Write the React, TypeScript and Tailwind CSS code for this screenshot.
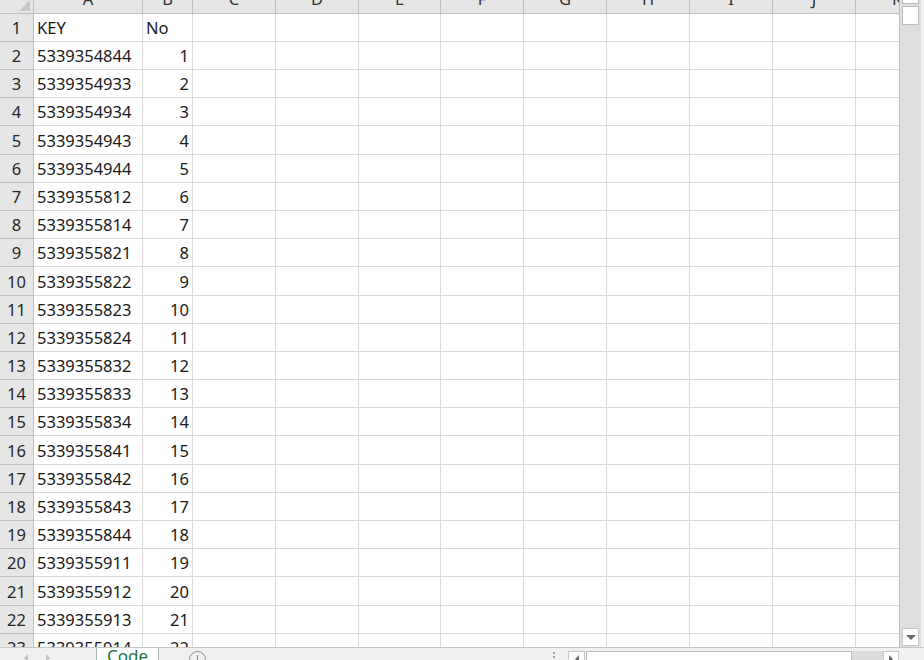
import React from "react";

const cols = ["A", "B", "C", "D", "E", "F", "G", "H", "I", "J", "K"];
const colW = ["w-[109px]", "w-[50px]", "w-[83px]", "w-[83px]", "w-[82px]", "w-[83px]", "w-[83px]", "w-[83px]", "w-[83px]", "w-[83px]", "w-[83px]"];

const keys = [
  "5339354844", "5339354933", "5339354934", "5339354943", "5339354944",
  "5339355812", "5339355814", "5339355821", "5339355822", "5339355823",
  "5339355824", "5339355832", "5339355833", "5339355834", "5339355841",
  "5339355842", "5339355843", "5339355844", "5339355911", "5339355912",
  "5339355913", "5339355914",
];

// excel row heights drift by a pixel now and then
const tallRows = new Set([5, 10, 16, 21]);

function Row({ n, a, b, text }: { n: number; a: string; b: string; text?: boolean }) {
  const h = tallRows.has(n) ? "h-[29px]" : "h-[28px]";
  return (
    <div className={`flex shrink-0 ${h}`}>
      <div className="w-[34px] shrink-0 flex items-center justify-center pt-[2px] bg-[#e6e6e6] border-r border-b border-[#bfbfbf] text-[#262626]">
        {n}
      </div>
      {cols.map((c, i) => (
        <div
          key={c}
          className={`${colW[i]} shrink-0 flex items-center pt-[2px] border-r border-b border-[#dadada] ${
            i === 1 && !text ? "justify-end pr-[3px]" : "pl-[3px]"
          }`}
        >
          {i === 0 ? a : i === 1 ? b : ""}
        </div>
      ))}
    </div>
  );
}

export default function App() {
  return (
    <div
      className="w-[924px] h-[660px] overflow-hidden bg-white flex flex-col text-[16.5px] text-[#1a1a1a]"
      style={{ fontFamily: '"Noto Sans", "Liberation Sans", sans-serif' }}
    >
      <div className="flex h-[647px] shrink-0">
        {/* sheet grid */}
        <div className="w-[900px] shrink-0 overflow-hidden flex flex-col border-r border-[#bdbdbd]">
          <div className="flex h-[14px] shrink-0 bg-[#e6e6e6]">
            <div className="w-[34px] shrink-0 border-r border-b border-[#bfbfbf] relative overflow-hidden">
              <div className="absolute right-[3px] bottom-[2px] w-0 h-0 border-l-[11px] border-l-transparent border-b-[11px] border-b-[#c8c8c8]" />
            </div>
            {cols.map((c, i) => (
              <div
                key={c}
                className={`${colW[i]} shrink-0 border-r border-b border-[#bfbfbf] overflow-hidden flex justify-center`}
              >
                <span className="leading-[16px] -mt-[9px] text-[#333]">{c}</span>
              </div>
            ))}
          </div>
          <Row n={1} a="KEY" b="No" text />
          {keys.map((k, i) => (
            <Row key={k} n={i + 2} a={k} b={String(i + 1)} />
          ))}
        </div>

        {/* vertical scrollbar */}
        <div className="flex-1 bg-[#dedede] flex flex-col items-center relative">
          <div className="absolute right-0 top-0 bottom-0 w-[3px] bg-[#f0f0f0]" />
          <div className="w-[17px] h-[4px] bg-white border-x border-b border-[#bdbdbd] mr-[3px]" />
          <div className="w-[17px] h-[19px] bg-white border border-[#bdbdbd] mt-[2px] mr-[3px]" />
          <div className="flex-1" />
          <div className="w-[17px] h-[18px] bg-white border border-[#c8c8c8] mb-[1px] mr-[3px] flex items-center justify-center">
            <div className="w-0 h-0 border-x-[5px] border-x-transparent border-t-[5px] border-t-[#6b6b6b]" />
          </div>
        </div>
      </div>

      {/* sheet tabs and horizontal scrollbar */}
      <div className="flex-1 flex bg-[#f0f0f0] border-t border-[#c6c6c6] relative overflow-hidden">
        <div className="w-[96px] shrink-0 flex items-start gap-[18px] pl-[24px] pt-[6px]">
          <div className="w-0 h-0 border-y-[4px] border-y-transparent border-r-[4px] border-r-[#c4c4c4]" />
          <div className="w-0 h-0 border-y-[4px] border-y-transparent border-l-[4px] border-l-[#c4c4c4]" />
        </div>
        <div className="w-[63px] shrink-0 bg-white border-x border-[#b5b5b5] flex justify-center overflow-hidden">
          <span className="text-[#217346] text-[17px] leading-[17px] -mt-[1px]">Code</span>
        </div>
        <div className="w-[409px] shrink-0 relative">
          <div className="absolute left-[30px] top-[3px] w-[17px] h-[17px] rounded-full border border-[#8a8a8a] flex items-start justify-center">
            <div className="w-[1px] h-[8px] bg-[#8a8a8a] mt-[3px]" />
          </div>
          <div className="absolute left-[394px] top-[4px] flex flex-col gap-[2px]">
            <div className="w-[2px] h-[2px] bg-[#a0a0a0]" />
            <div className="w-[2px] h-[2px] bg-[#a0a0a0]" />
          </div>
        </div>
        <div className="flex-1 flex items-start pt-[3px] pr-[24px]">
          <div className="w-[17px] h-[12px] bg-white border border-[#c8c8c8] flex items-center justify-center">
            <div className="w-0 h-0 border-y-[4px] border-y-transparent border-r-[4px] border-r-[#6b6b6b] mt-[3px]" />
          </div>
          <div className="w-[266px] h-[12px] bg-white border border-[#bdbdbd] ml-[1px]" />
          <div className="w-[31px] h-[12px] bg-[#dcdcdc]" />
          <div className="w-[16px] h-[12px] bg-white border border-[#c8c8c8] flex items-center justify-center">
            <div className="w-0 h-0 border-y-[4px] border-y-transparent border-l-[4px] border-l-[#6b6b6b] mt-[3px]" />
          </div>
        </div>
      </div>
    </div>
  );
}
